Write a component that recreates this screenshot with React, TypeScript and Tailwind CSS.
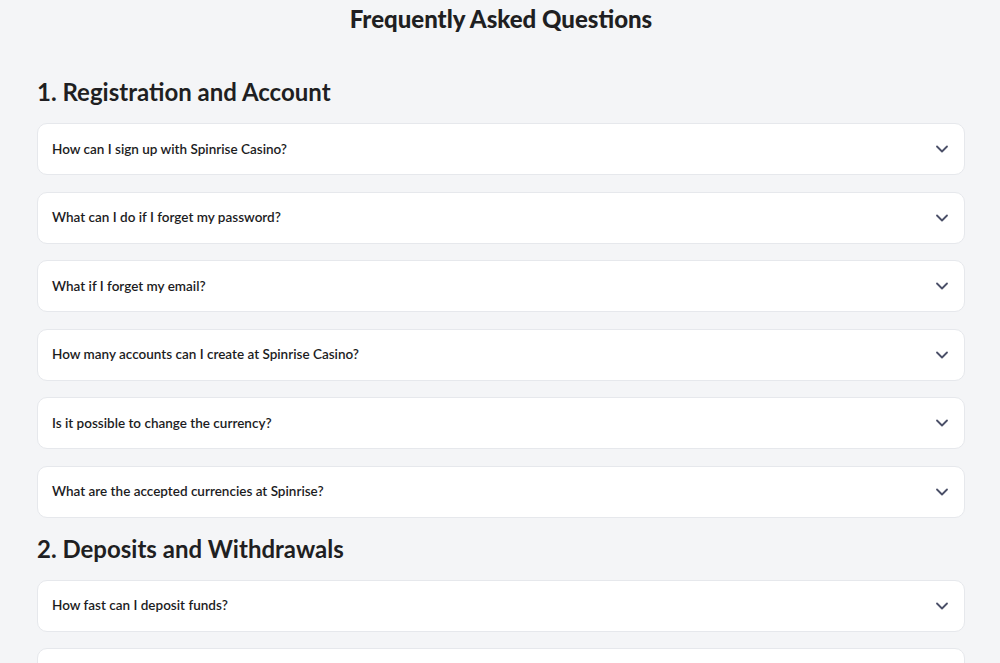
import { ChevronDown } from 'lucide-react';

const sections = [
  {
    title: '1. Registration and Account',
    items: [
      'How can I sign up with Spinrise Casino?',
      'What can I do if I forget my password?',
      'What if I forget my email?',
      'How many accounts can I create at Spinrise Casino?',
      'Is it possible to change the currency?',
      'What are the accepted currencies at Spinrise?',
    ],
  },
  {
    title: '2. Deposits and Withdrawals',
    // second question sits below the fold
    items: ['How fast can I deposit funds?', ''],
  },
];

function FaqItem({ question }: { question: string }) {
  return (
    <button className="flex h-[52px] w-full shrink-0 items-center justify-between rounded-[10px] border border-[#e6e8ec] bg-white pl-[14px] pr-[12px] text-left">
      <span className="text-[13.5px] font-semibold text-[#1c1c1e]">{question}</span>
      <ChevronDown className="h-[20px] w-[20px] text-[#4b5068]" strokeWidth={2.2} />
    </button>
  );
}

export default function App() {
  return (
    <div
      className="h-[663px] overflow-hidden bg-[#f4f5f7] pl-[37px] pr-[35px]"
      style={{ fontFamily: 'Lato, "Noto Sans", sans-serif' }}
    >
      <h1 className="pt-[5px] text-center text-[24px] font-black leading-[28px] text-[#1f1f22]">
        Frequently Asked Questions
      </h1>

      {sections.map((section, i) => (
        <section key={section.title} className={i === 0 ? 'mt-[43px]' : 'mt-[15px]'}>
          <h2 className="mb-[15px] text-[24px] font-bold leading-[32px] text-[#1f1f22]">
            {section.title}
          </h2>
          <div className="flex flex-col gap-[16.5px]">
            {section.items.map((q, j) => (
              <FaqItem key={j} question={q} />
            ))}
          </div>
        </section>
      ))}
    </div>
  );
}
